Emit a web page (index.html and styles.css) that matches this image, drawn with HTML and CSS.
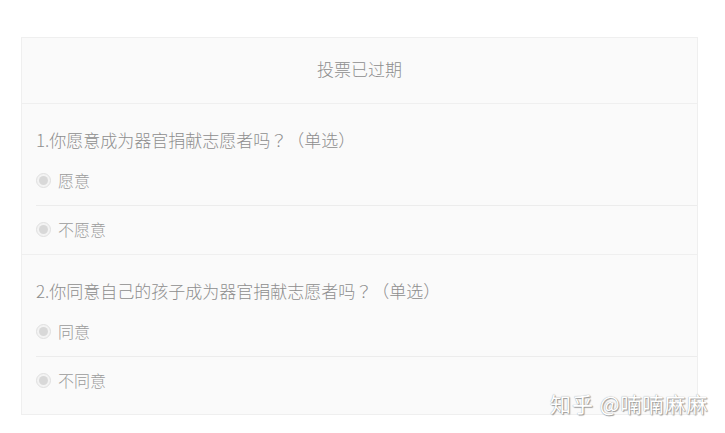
FILE: index.html
```html
<!DOCTYPE html>
<html lang="zh-CN">
<head>
<meta charset="utf-8">
<title>投票已过期</title>
<link rel="stylesheet" href="styles.css">
</head>
<body>
<div class="page">
  <div class="card">
    <div class="card-header">投票已过期</div>
    <div class="question">
      <div class="q-title">1.你愿意成为器官捐献志愿者吗<span class="punct" lang="zh-TW">？</span>（单选）</div>
      <div class="option"><span class="radio"></span><span class="label">愿意</span></div>
      <div class="option"><span class="radio"></span><span class="label">不愿意</span></div>
    </div>
    <div class="question last">
      <div class="q-title">2.你同意自己的孩子成为器官捐献志愿者吗<span class="punct" lang="zh-TW">？</span>（单选）</div>
      <div class="option"><span class="radio"></span><span class="label">同意</span></div>
      <div class="option"><span class="radio"></span><span class="label">不同意</span></div>
    </div>
  </div>
  <div class="watermark">知乎 @喃喃麻麻</div>
</div>
</body>
</html>
```
FILE: styles.css
```css
html, body {
  margin: 0;
  padding: 0;
  background: #ffffff;
}
body {
  font-family: "Noto Sans CJK SC", "Noto Sans", sans-serif;
}
.page {
  position: relative;
  width: 725px;
  height: 433px;
  padding: 37px 0 0 21px;
  box-sizing: border-box;
}
.card {
  width: 677px;
  background: #fafafa;
  border: 1px solid #efefef;
  box-sizing: border-box;
}
.card-header {
  height: 66px;
  line-height: 62px;
  padding-bottom: 4px;
  box-sizing: border-box;
  text-align: center;
  font-size: 17px;
  font-weight: 300;
  color: #8e8e8e;
  border-bottom: 1px solid #efefef;
}
.question {
  padding: 24px 0 0 14px;
  border-bottom: 1px solid #efefef;
}
.question.last {
  border-bottom: none;
  padding-bottom: 9px;
}
.q-title {
  font-size: 17px;
  font-weight: 300;
  line-height: 24px;
  color: #8e8e8e;
  margin-bottom: 5px;
  text-spacing-trim: space-all;
}
.punct {
  font-family: "Noto Sans CJK TC", "Noto Sans CJK SC", sans-serif;
}
.option {
  display: flex;
  align-items: center;
  height: 48px;
  padding-bottom: 2px;
  box-sizing: border-box;
}
.option + .option {
  border-top: 1px solid #ececec;
  height: 49px;
}
.radio {
  width: 15px;
  height: 15px;
  margin-right: 7px;
  border-radius: 50%;
  border: 1px solid #e0e0e0;
  box-sizing: border-box;
  background: #f3f3f3;
  display: flex;
  align-items: center;
  justify-content: center;
}
.radio::after {
  content: "";
  width: 9px;
  height: 9px;
  border-radius: 50%;
  background: #d8d8d8;
}
.label {
  font-size: 16px;
  font-weight: 300;
  color: #9a9a9a;
  line-height: 20px;
}
.watermark {
  position: absolute;
  left: 550px;
  top: 390px;
  font-size: 21px;
  line-height: 26px;
  letter-spacing: 1px;
  color: #ffffff;
  text-shadow: 0 0 1px #8a8a8a, 1px 1px 1px #9a9a9a;
  white-space: nowrap;
}
```
